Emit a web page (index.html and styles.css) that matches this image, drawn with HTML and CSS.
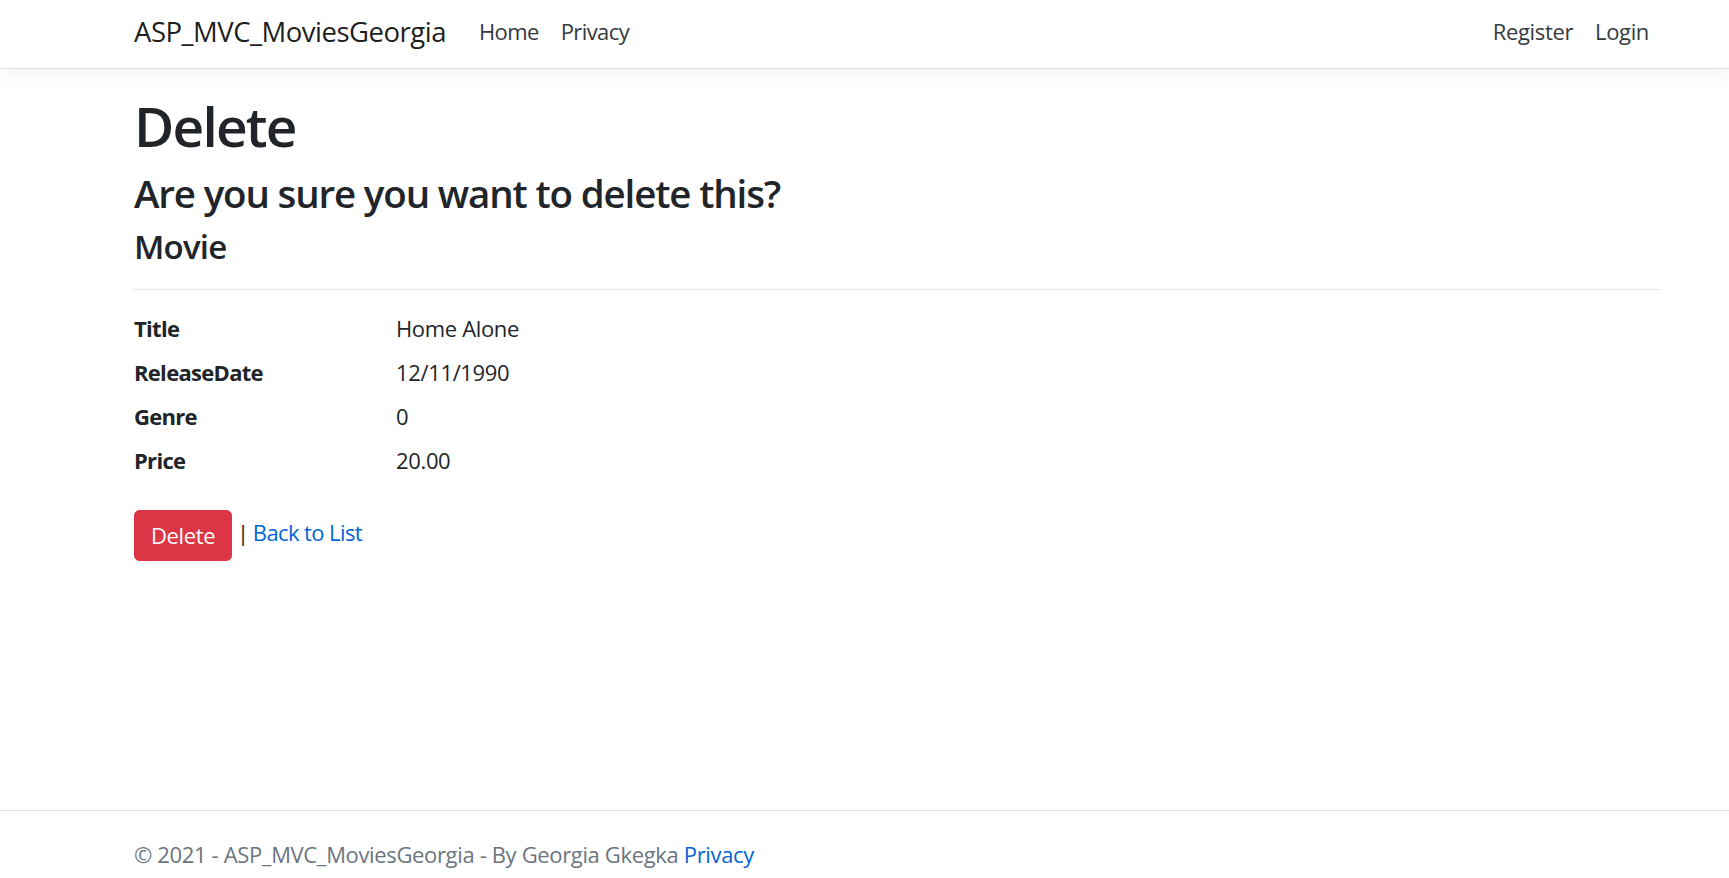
FILE: index.html
```html
<!DOCTYPE html>
<html lang="en">
<head>
<meta charset="utf-8">
<title>Delete - ASP_MVC_MoviesGeorgia</title>
<link rel="stylesheet" href="styles.css">
</head>
<body>
<div class="page">
  <header class="navbar">
    <div class="container nav-inner">
      <a class="brand" href="#">ASP_MVC_MoviesGeorgia</a>
      <ul class="nav nav-main">
        <li><a class="nav-link" href="#">Home</a></li>
        <li><a class="nav-link" href="#">Privacy</a></li>
      </ul>
      <ul class="nav nav-right">
        <li><a class="nav-link" href="#">Register</a></li>
        <li><a class="nav-link" href="#">Login</a></li>
      </ul>
    </div>
  </header>
  <main class="container main">
    <h1>Delete</h1>
    <h3>Are you sure you want to delete this?</h3>
    <div>
      <h4>Movie</h4>
      <hr>
      <dl class="details">
        <dt>Title</dt><dd>Home Alone</dd>
        <dt>ReleaseDate</dt><dd>12/11/1990</dd>
        <dt>Genre</dt><dd>0</dd>
        <dt>Price</dt><dd>20.00</dd>
      </dl>
      <form class="actions">
        <button type="button" class="btn-danger">Delete</button><span class="sep"> | </span><a href="#" class="link back">Back to List</a>
      </form>
    </div>
  </main>
  <footer class="footer">
    <div class="container">&copy; 2021 - ASP_MVC_MoviesGeorgia - By Georgia Gkegka <a href="#" class="link">Privacy</a></div>
  </footer>
</div>
</body>
</html>
```
FILE: styles.css
```css
* { box-sizing: border-box; }
html, body { margin: 0; padding: 0; }
body {
  font-family: "Open Sans", "Noto Sans", sans-serif;
  font-size: 22px;
  line-height: 1.5;
  letter-spacing: -0.35px;
  color: #212529;
  background: #fff;
  overflow: hidden;
}
.page {
  height: 878px;
  display: grid;
  grid-template-rows: 69px 1fr 68px;
}
.container {
  padding-left: 134px;
  padding-right: 69px;
}
.navbar {
  border-bottom: 1px solid #dee2e6;
  box-shadow: 0 5px 16px rgba(0,0,0,.05);
  background: #fff;
  position: relative;
  z-index: 1;
}
.nav-inner {
  height: 68px;
  padding-bottom: 6px;
  display: flex;
  align-items: center;
}
.brand {
  font-size: 27.5px;
  letter-spacing: -0.5px;
  color: rgba(0,0,0,.9);
  text-decoration: none;
  margin-right: 22px;
  line-height: 41px;
}
.nav {
  list-style: none;
  margin: 0;
  padding: 0;
  display: flex;
}
.nav-main { flex: 1; }
.nav-link {
  display: block;
  padding: 5px 11px;
  color: #343a40;
  text-decoration: none;
}
.nav-main .nav-link { letter-spacing: -0.6px; }
.main { padding-top: 24px; }
h1, h3, h4 { margin: 0 0 11px; font-weight: 600; line-height: 1.2; }
h1 { font-size: 55px; letter-spacing: -1.8px; }
h3 { font-size: 38.5px; letter-spacing: -1.15px; }
h4 { font-size: 33px; letter-spacing: -0.8px; }
hr {
  margin: 22px 0;
  border: 0;
  border-top: 1px solid rgba(0,0,0,.1);
}
.details {
  display: grid;
  grid-template-columns: 262px 1fr;
  margin: 0 0 22px;
}
.details dt { font-weight: 700; margin: 0 0 11px; letter-spacing: -0.7px; }
.details dd { margin: 0 0 11px; }
.actions { margin: 0; }
.btn-danger {
  font-family: inherit;
  font-size: 22px;
  letter-spacing: -0.35px;
  line-height: 33px;
  padding: 8px 16px;
  color: #fff;
  background: #dc3545;
  border: 1px solid #dc3545;
  border-radius: 5.5px;
  vertical-align: middle;
  cursor: pointer;
}
.sep { letter-spacing: -1px; }
.link { color: #0366d6; text-decoration: none; }
.back { letter-spacing: -0.6px; }
.footer {
  border-top: 1px solid #dee2e6;
  color: #6c757d;
  line-height: 86px;
  white-space: nowrap;
  overflow: hidden;
}
```
